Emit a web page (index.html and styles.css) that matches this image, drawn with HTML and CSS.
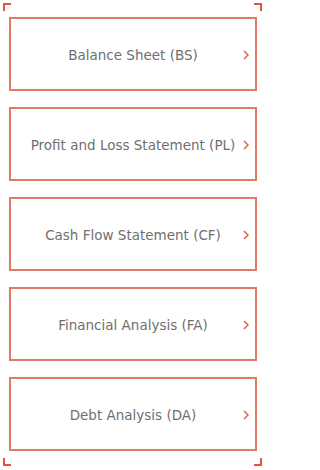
FILE: index.html
```html
<!DOCTYPE html>
<html>
<head>
<meta charset="utf-8">
<link rel="stylesheet" href="styles.css">
</head>
<body>
<div class="frame">
  <span class="corner tl"></span>
  <span class="corner tr"></span>
  <span class="corner bl"></span>
  <span class="corner br"></span>
  <div class="list">
    <div class="card"><span class="label">Balance Sheet (BS)</span><svg class="chev" viewBox="0 0 6 10" width="6" height="10"><path d="M1 1 L5 5 L1 9" fill="none" stroke="#e0604a" stroke-width="1.5"/></svg></div>
    <div class="card"><span class="label">Profit and Loss Statement (PL)</span><svg class="chev" viewBox="0 0 6 10" width="6" height="10"><path d="M1 1 L5 5 L1 9" fill="none" stroke="#e0604a" stroke-width="1.5"/></svg></div>
    <div class="card"><span class="label">Cash Flow Statement (CF)</span><svg class="chev" viewBox="0 0 6 10" width="6" height="10"><path d="M1 1 L5 5 L1 9" fill="none" stroke="#e0604a" stroke-width="1.5"/></svg></div>
    <div class="card"><span class="label">Financial Analysis (FA)</span><svg class="chev" viewBox="0 0 6 10" width="6" height="10"><path d="M1 1 L5 5 L1 9" fill="none" stroke="#e0604a" stroke-width="1.5"/></svg></div>
    <div class="card"><span class="label">Debt Analysis (DA)</span><svg class="chev" viewBox="0 0 6 10" width="6" height="10"><path d="M1 1 L5 5 L1 9" fill="none" stroke="#e0604a" stroke-width="1.5"/></svg></div>
  </div>
</div>
</body>
</html>
```
FILE: styles.css
```css
html, body {
  margin: 0;
  padding: 0;
  background: #ffffff;
}
.frame {
  position: relative;
  width: 265px;
  height: 470px;
  box-sizing: border-box;
  padding: 17px 8px 0 9px;
  font-family: "DejaVu Sans", Verdana, sans-serif;
}
.corner {
  position: absolute;
  width: 8px;
  height: 8px;
  box-sizing: border-box;
  border: 0 solid #e0553c;
}
.tl { left: 3px; top: 3px; border-top-width: 2px; border-left-width: 2px; }
.tr { right: 3px; top: 3px; border-top-width: 2px; border-right-width: 2px; }
.bl { left: 3px; bottom: 4px; border-bottom-width: 2px; border-left-width: 2px; }
.br { right: 3px; bottom: 4px; border-bottom-width: 2px; border-right-width: 2px; }
.list {
  display: flex;
  flex-direction: column;
  gap: 16px;
}
.card {
  position: relative;
  height: 74px;
  box-sizing: border-box;
  border: 2px solid #e27a68;
  padding-top: 2px;
  display: flex;
  align-items: center;
  justify-content: center;
}
.label {
  font-size: 13.5px;
  color: #6f6f6f;
  letter-spacing: 0;
}
.chev {
  position: absolute;
  right: 6px;
  top: 50%;
  margin-top: -4px;
}
```
